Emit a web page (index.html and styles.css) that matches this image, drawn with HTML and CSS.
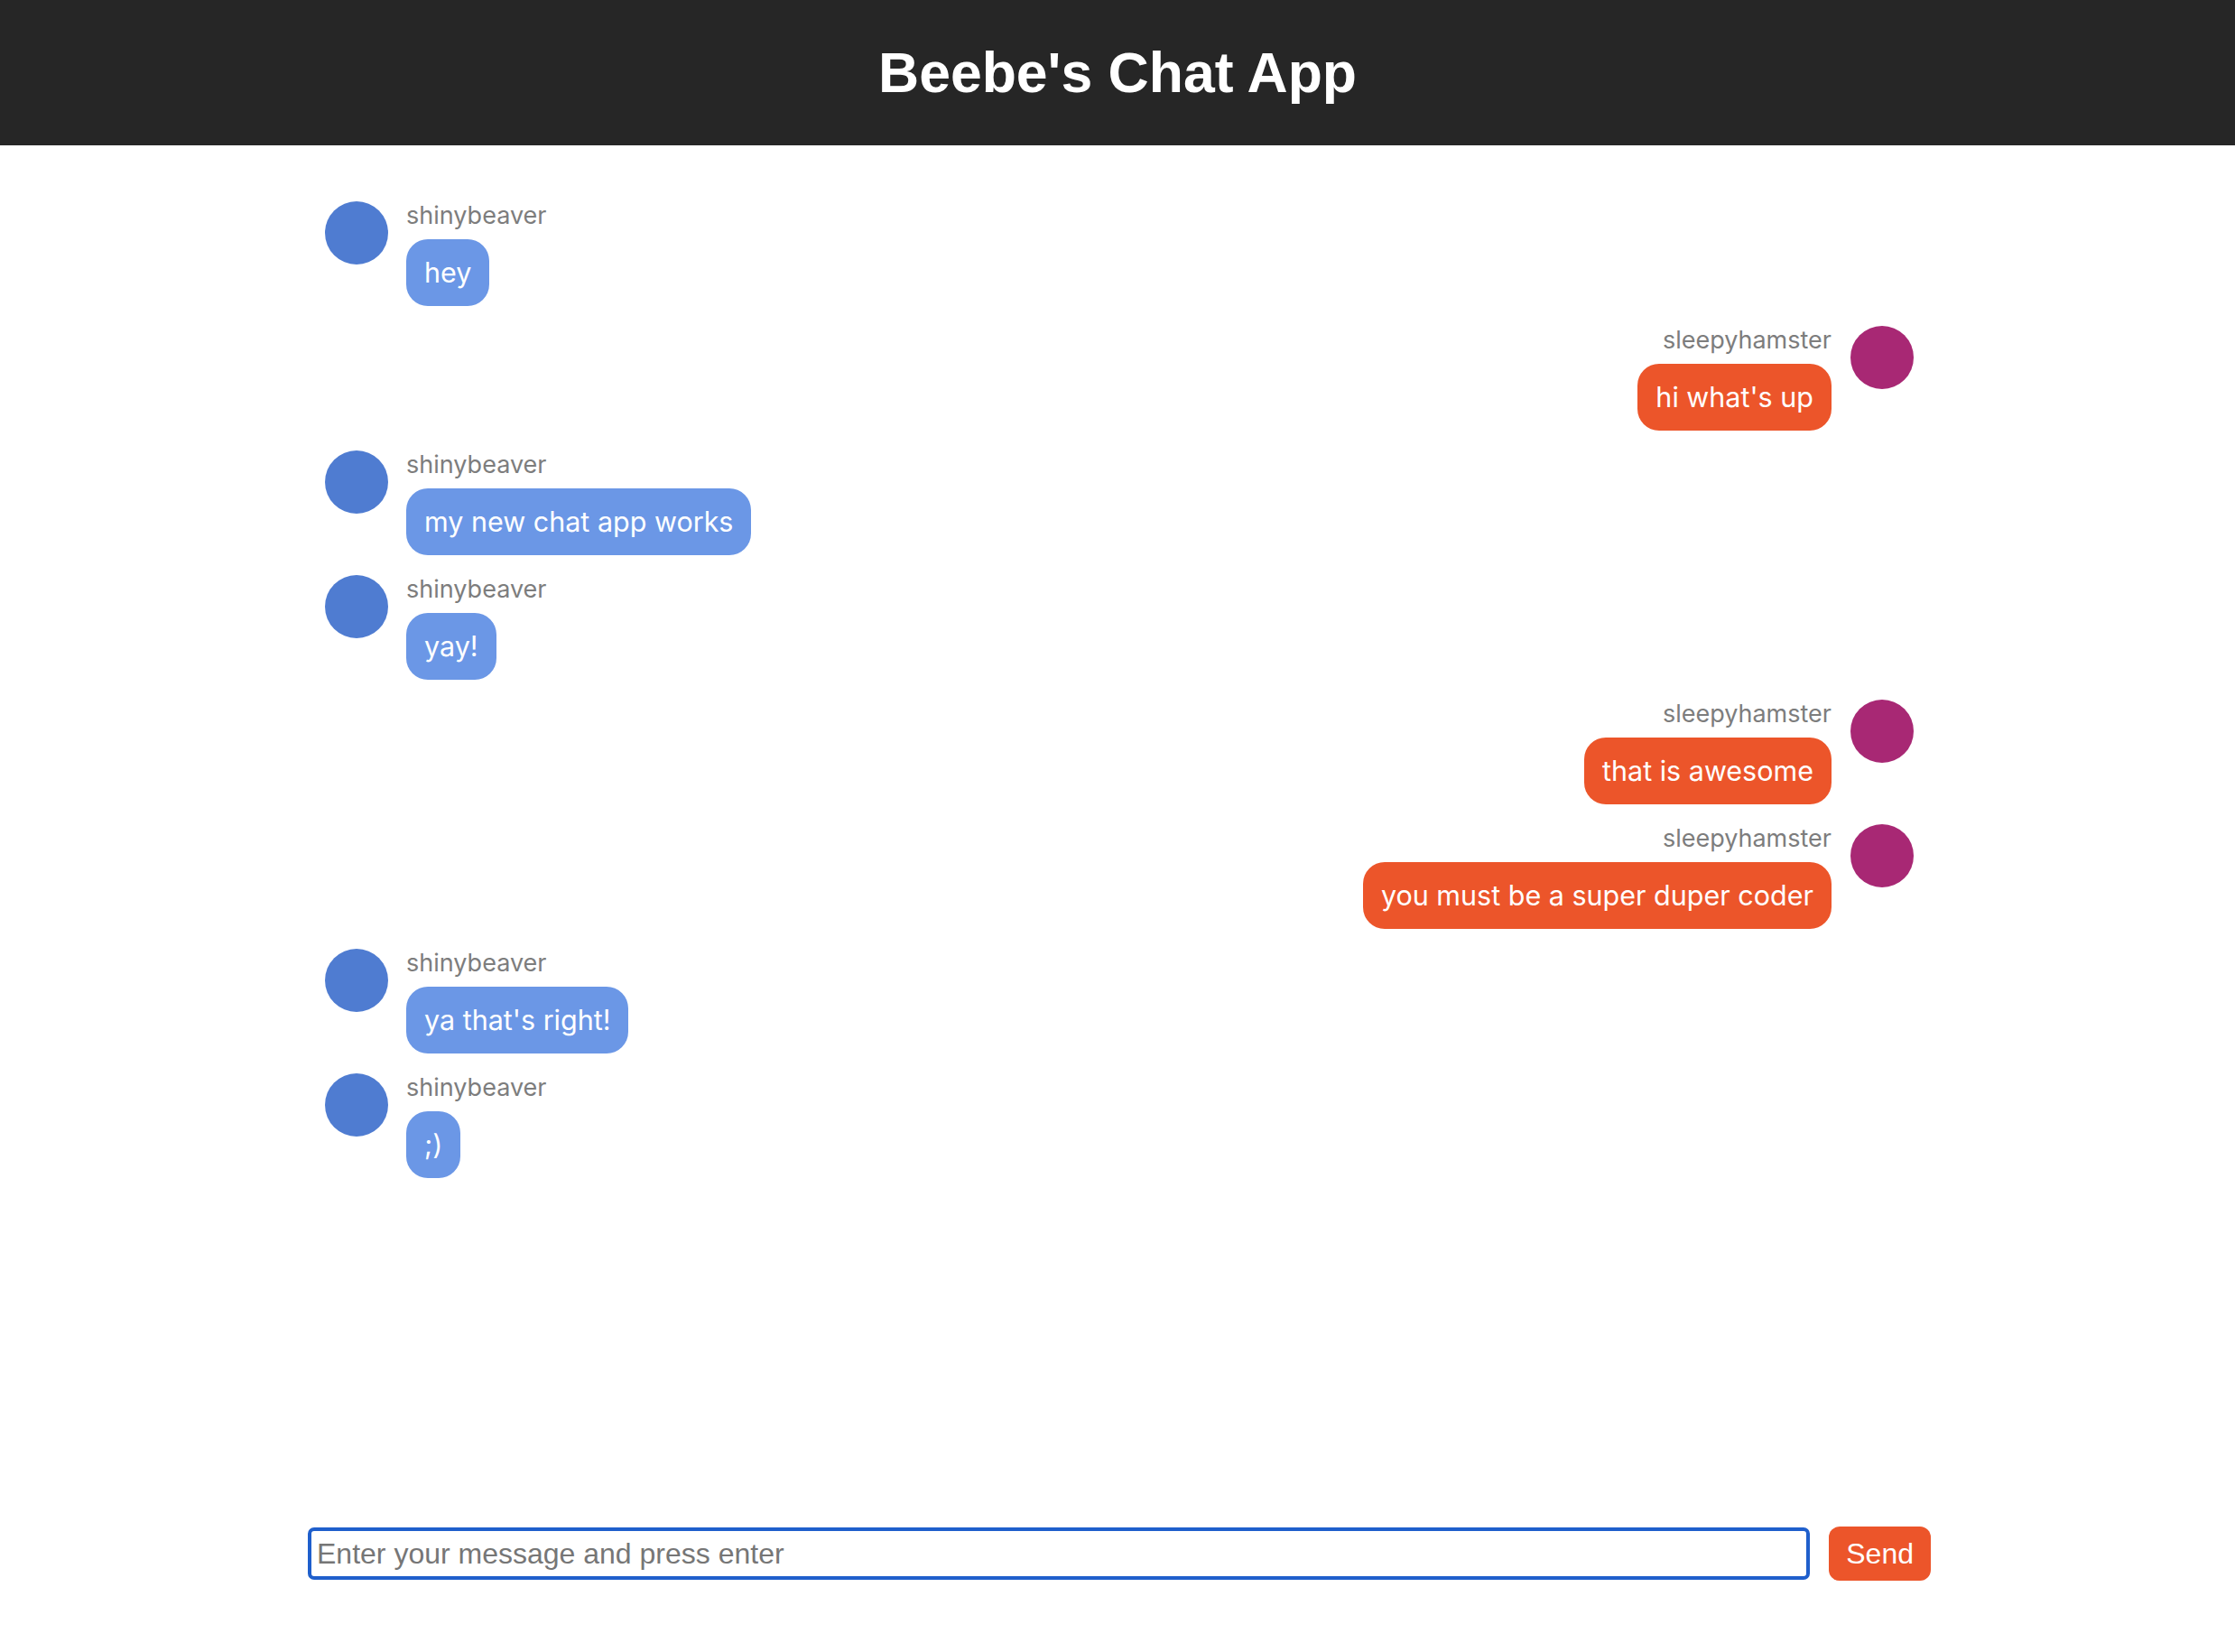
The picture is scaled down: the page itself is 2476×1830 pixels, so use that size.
FILE: index.html
```html
<!DOCTYPE html>
<html lang="en">
<head>
<meta charset="utf-8">
<title>Beebe's Chat App</title>
<link rel="stylesheet" href="styles.css">
</head>
<body>
<header class="app-header"><h1 class="app-title">Beebe's Chat App</h1></header>
<main class="chat">
  <ul class="messages">
    <li class="message them"><span class="avatar"></span><div class="content"><div class="username">shinybeaver</div><div class="bubble">hey</div></div></li>
    <li class="message me"><span class="avatar"></span><div class="content"><div class="username">sleepyhamster</div><div class="bubble">hi what's up</div></div></li>
    <li class="message them"><span class="avatar"></span><div class="content"><div class="username">shinybeaver</div><div class="bubble">my new chat app works</div></div></li>
    <li class="message them"><span class="avatar"></span><div class="content"><div class="username">shinybeaver</div><div class="bubble">yay!</div></div></li>
    <li class="message me"><span class="avatar"></span><div class="content"><div class="username">sleepyhamster</div><div class="bubble">that is awesome</div></div></li>
    <li class="message me"><span class="avatar"></span><div class="content"><div class="username">sleepyhamster</div><div class="bubble">you must be a super duper coder</div></div></li>
    <li class="message them"><span class="avatar"></span><div class="content"><div class="username">shinybeaver</div><div class="bubble">ya that's right!</div></div></li>
    <li class="message them"><span class="avatar"></span><div class="content"><div class="username">shinybeaver</div><div class="bubble">;)</div></div></li>
  </ul>
  <form class="composer">
    <input class="composer-input" type="text" placeholder="Enter your message and press enter">
    <button class="composer-send" type="button">Send</button>
  </form>
</main>
</body>
</html>
```
FILE: styles.css
```css
html, body {
  margin: 0;
  padding: 0;
  height: 100%;
  background: #ffffff;
}
body {
  display: flex;
  flex-direction: column;
  font-family: Inter, "Open Sans", sans-serif;
}
.app-header {
  background: #262626;
  height: 161px;
  display: flex;
  align-items: center;
  justify-content: center;
  flex: none;
}
.app-title {
  margin: 0;
  color: #ffffff;
  font-family: "Liberation Sans", Arial, sans-serif;
  font-weight: 700;
  font-size: 62.5px;
  line-height: 1;
}
.chat {
  flex: 1;
  width: 1802px;
  margin: 0 auto;
  display: flex;
  flex-direction: column;
  min-height: 0;
}
.messages {
  flex: 1;
  list-style: none;
  margin: 0;
  padding: 62px 19px 0 23px;
}
.message {
  display: flex;
  align-items: flex-start;
  gap: 20px;
  margin-bottom: 22px;
}
.message.me {
  flex-direction: row-reverse;
  gap: 21px;
}
.avatar {
  width: 70px;
  height: 70px;
  border-radius: 50%;
  flex: none;
}
.them .avatar { background: #4f7cd1; }
.me .avatar { background: #a82874; }
.content {
  display: flex;
  flex-direction: column;
  align-items: flex-start;
}
.me .content { align-items: flex-end; }
.username {
  color: #7d7d7d;
  font-size: 27px;
  line-height: 32px;
  margin-bottom: 10px;
}
.bubble {
  color: #ffffff;
  font-size: 30.5px;
  line-height: 38px;
  padding: 18px 20px;
  border-radius: 24px;
}
.them .bubble { background: #6b97e6; }
.me .bubble { background: #ec552a; }
.composer {
  display: flex;
  align-items: center;
  gap: 21px;
  margin: 0 0 79px 4px;
}
.composer-input {
  flex: 1;
  height: 58px;
  box-sizing: border-box;
  border: 4px solid #1f5fcc;
  border-radius: 7px;
  padding: 0 6px;
  font-family: "Liberation Sans", Arial, sans-serif;
  font-size: 32px;
  color: #222;
  outline: none;
}
.composer-input::placeholder { color: #767676; }
.composer-send {
  height: 60px;
  padding: 0 19px;
  border: none;
  border-radius: 12px;
  background: #ec552a;
  color: #ffffff;
  font-family: "Liberation Sans", Arial, sans-serif;
  font-size: 32px;
}
```
